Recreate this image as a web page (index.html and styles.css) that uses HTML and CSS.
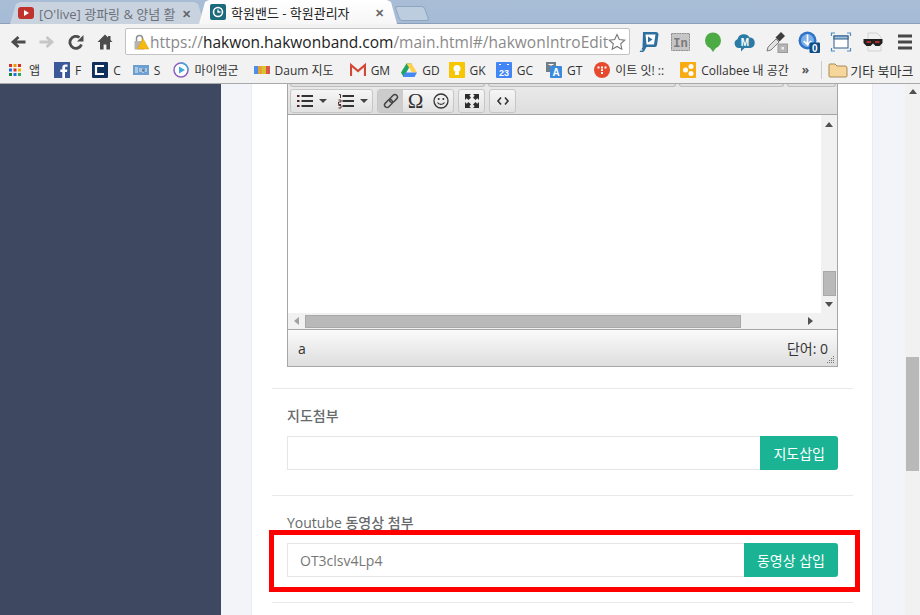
FILE: index.html
```html
<!DOCTYPE html>
<html>
  <head>
    <meta charset="utf-8">
    <title>학원밴드 - 학원관리자</title>
    <link rel="stylesheet" href="styles.css">
  </head>
  <body>
    <div id="tabstrip">
      <div class="tab">
        <svg class="fav" viewBox="0 0 16 16"><rect y="2" width="16" height="12" rx="3" fill="#c0322d"/><path d="M6 5l5 3-5 3z" fill="#fff"/></svg>
        <span class="tab-title">[O'live] 광파링 &amp; 양념 활</span>
        <span class="tab-x">✕</span>
      </div>
      <div class="tab active">
        <svg class="fav" viewBox="0 0 16 16"><rect width="16" height="16" rx="2" fill="#1b6b7c"/><circle cx="8" cy="8" r="4.500" fill="none" stroke="#fff" stroke-width="1.600"/><path d="M8 5.500V8h2.500" fill="none" stroke="#fff" stroke-width="1.300"/></svg>
        <span class="tab-title">학원밴드 - 학원관리자</span>
        <span class="tab-x">✕</span>
      </div>
      <div class="tab-new"></div>
    </div>

    <div id="toolbar">
      <svg class="nav" viewBox="0 0 16 16"><path d="M15.500 8H4M8.500 3L3 8l5.500 5" fill="none" stroke="#4c4c4c" stroke-width="2.800"/></svg>
      <svg class="nav" viewBox="0 0 16 16"><path d="M.5 8H12M7.500 3L13 8l-5.500 5" fill="none" stroke="#c6c6c6" stroke-width="2.800"/></svg>
      <svg class="nav" viewBox="0 0 16 16"><path d="M13.500 10.500A6 6 0 1 1 11.500 3.500" fill="none" stroke="#4c4c4c" stroke-width="2.800"/><path d="M9 7.500h6.500V1z" fill="#4c4c4c"/></svg>
      <svg class="nav" viewBox="0 0 16 16"><path d="M11 2h2.500v4.500L11 5z" fill="#4c4c4c"/><path d="M8 .5L.5 8H3v7.500h3.600V10.500h2.800v5H13V8h2.500z" fill="#4c4c4c"/></svg>
      <div id="omnibox">
        <svg class="lock" viewBox="0 0 16 16"><path d="M3.500 7V4.500a3 3 0 0 1 6 0V7" fill="none" stroke="#8f8f8f" stroke-width="1.500"/><rect x="1.500" y="7" width="9.500" height="8.500" fill="#b4b4b4"/><path d="M10 4.500l5.800 10.500H4.200z" fill="#f5b914" stroke="#d99a00" stroke-width=".5"/></svg>
        <div class="url"><span class="url-dim">https://</span>hakwon.hakwonband.com<span class="url-dim">/main.html#/hakwonIntroEdit</span></div>
        <svg class="star" viewBox="0 0 18 18"><path d="M9 1.500l2.300 5 5.400.6-4 3.700 1.100 5.400L9 13.500l-4.800 2.700 1.100-5.400-4-3.700 5.400-.6z" fill="#fff" stroke="#777" stroke-width="1.100"/></svg>
      </div>
      <div class="extensions">
        <svg class="ext" viewBox="0 0 22 22"><path d="M5 1h13c1.500 0 2.500 1 2.500 2.500L19 14c-.3 1.200-1 2-2 2H8.500l-2 3.500c-.5 1-1.500 1.500-2.500 1.500H1.500l3-4.500z" fill="#2d6f9e"/><path d="M7.500 3.500h10L16 13.500H8.500z" fill="#fff"/><path d="M10 5.500l4.500 3-4.500 3z" fill="#2d6f9e"/><circle cx="3.500" cy="19" r="1" fill="#cfe0ec"/></svg>
        <svg class="ext" viewBox="0 0 22 22"><rect x="1.500" y="2.500" width="18" height="17" fill="#c6c6c6" stroke="#8e8e8e" stroke-dasharray="2 .6"/><text x="10.500" y="15.500" text-anchor="middle" class="ext-in">In</text></svg>
        <svg class="ext" viewBox="0 0 22 22"><circle cx="11" cy="9.500" r="8" fill="#4cab45"/><path d="M7.500 16l3.500 5 3.500-5z" fill="#4cab45"/></svg>
        <svg class="ext" viewBox="0 0 22 22"><path d="M5 17a4.500 4.500 0 0 1-1.500-8.700A6.500 6.500 0 0 1 15.500 6.500 5.300 5.300 0 0 1 16.500 17H10.500L7 20.500V17z" fill="#2b7ba4"/><text x="11" y="14.500" text-anchor="middle" class="ext-m">M</text></svg>
        <svg class="ext" viewBox="0 0 22 22"><path d="M1 20l1-4 8-8 3 3-8 8z" fill="#e2e2e2" stroke="#7d7d7d"/><path d="M9.500 6.500L15 1l4 4-5.500 5.500z" fill="#3d3d3d"/><rect x="12" y="13" width="9.500" height="8.500" fill="#b5b5b5" stroke="#9a9a9a"/><rect x="15.500" y="16" width="2.500" height="2.500" fill="#eee"/></svg>
        <svg class="ext" viewBox="0 0 22 22"><circle cx="9.500" cy="9.500" r="9" fill="#2f73c7"/><circle cx="9.500" cy="9.500" r="6.500" fill="#7eb0e8"/><path d="M9.500 3.500v10M5.800 10l3.700 3.800 3.700-3.800" fill="none" stroke="#fff" stroke-width="1.700"/><rect x="11.500" y="11.500" width="10.500" height="10.500" rx="1" fill="#0f4d86"/><text x="16.700" y="20.500" text-anchor="middle" class="ext-zero">0</text></svg>
        <svg class="ext" viewBox="0 0 22 22"><rect x="4" y="5" width="14" height="12" fill="#fff" stroke="#2d5f8c"/><rect x="4" y="5" width="14" height="3" fill="#9fbfdc" stroke="#2d5f8c"/><path d="M1.500 5V2H5M17 2h3.500v3M20.500 17v3H17M5 20H1.500v-3" fill="none" stroke="#4f8dc0" stroke-width="1.200"/></svg>
        <svg class="ext" viewBox="0 0 22 22"><path d="M6 2h9l4 4v14H6z" fill="#f1f1f1" stroke="#d2d2d2"/><path d="M1.500 8h19v4l-3 3h-4l-2.500-2.500L8.500 15h-4l-3-3z" fill="#1f1f1f"/><rect x="4.500" y="10" width="4.500" height="2" fill="#b22d2d"/><rect x="13" y="10" width="4.500" height="2" fill="#b22d2d"/></svg>
        <svg class="ext" viewBox="0 0 22 22"><path d="M4 5h14M4 11h14M4 17h14" stroke="#474747" stroke-width="3"/></svg>
      </div>
    </div>

    <div id="bookmarks">
      <div class="bm bm-apps"><svg class="bm-ico apps" viewBox="0 0 12 12"><path d="M0 0h3v3H0z" fill="#d93025"/><path d="M4.500 0h3v3h-3z" fill="#f29900"/><path d="M9 0h3v3H9z" fill="#d93025"/><path d="M0 4.500h3v3H0z" fill="#1a73e8"/><path d="M4.500 4.500h3v3h-3z" fill="#d93025"/><path d="M9 4.500h3v3H9z" fill="#f9ab00"/><path d="M0 9h3v3H0z" fill="#188038"/><path d="M4.500 9h3v3h-3z" fill="#1a73e8"/><path d="M9 9h3v3H9z" fill="#34a853"/></svg>앱</div>
      <div class="bm bm-f"><svg class="bm-ico" viewBox="0 0 16 16"><rect width="16" height="16" fill="#3b5998"/><path d="M11 16V10h2l.4-2.500H11V6c0-.8.300-1.300 1.300-1.300h1.200V2.500H11.500C9.500 2.500 8.300 3.700 8.300 5.700v1.800H6.300V10h2v6z" fill="#fff"/></svg>F</div>
      <div class="bm bm-c"><svg class="bm-ico" viewBox="0 0 16 16"><rect width="16" height="16" rx="1" fill="#10305c"/><path d="M12 4H4v8h8" fill="none" stroke="#fff" stroke-width="2.200"/></svg>C</div>
      <div class="bm bm-s"><svg class="bm-ico" viewBox="0 0 16 16"><rect y="3" width="16" height="10" fill="#6d9fd0"/><path d="M2 6h3M2 8h3M2 10h3M7 6v4M9 6v4h2M13 6v4" stroke="#e8f0fa"/></svg>S</div>
      <div class="bm bm-my"><svg class="bm-ico" viewBox="0 0 16 16"><circle cx="8" cy="8" r="7" fill="#fff" stroke="#8d5fbf" stroke-width="1.500"/><path d="M8 1a7 7 0 0 1 7 7" fill="none" stroke="#3fa8d8" stroke-width="1.500"/><path d="M6 4.500l6 3.500-6 3.500z" fill="#3fa8d8"/></svg>마이엠군</div>
      <div class="bm bm-daum"><svg class="bm-ico" viewBox="0 0 16 16"><path d="M0 4h4v8H0z" fill="#4d8ee8"/><path d="M4 4h4v8H4z" fill="#e8a13a"/><path d="M8 4h4v8H8z" fill="#d9c52a"/><path d="M12 4h4v8h-4z" fill="#d9564a"/></svg>Daum 지도</div>
      <div class="bm bm-gm"><svg class="bm-ico" viewBox="0 0 16 16"><rect y="2.500" width="16" height="11" fill="#f2f2f2"/><path d="M1 14V3l7 6 7-6v11" fill="none" stroke="#d14836" stroke-width="2.200"/></svg>GM</div>
      <div class="bm bm-gd"><svg class="bm-ico" viewBox="0 0 16 16"><path d="M5.500 1.500h5L5 11 2.500 15 0 10.500z" fill="#1fa463"/><path d="M5.500 1.500h5l5.500 9h-5z" fill="#ffd04b"/><path d="M4 10.500h12L13.500 15H2z" fill="#4688f4"/></svg>GD</div>
      <div class="bm bm-gk"><svg class="bm-ico" viewBox="0 0 16 16"><rect width="16" height="16" rx="1" fill="#f7c600"/><circle cx="8" cy="6.500" r="3.500" fill="#fff"/><rect x="6" y="10" width="4" height="3" fill="#fff"/></svg>GK</div>
      <div class="bm bm-gc"><svg class="bm-ico" viewBox="0 0 16 16"><rect width="16" height="16" rx="1" fill="#4285f4"/><path d="M3 2.500h2M11 2.500h2" stroke="#fff"/><text x="8" y="14" text-anchor="middle" class="ext-cal">23</text></svg>GC</div>
      <div class="bm bm-gt"><svg class="bm-ico" viewBox="0 0 16 16"><rect x="0" y="0" width="10" height="10" fill="#6f7f8a"/><path d="M2.500 2.500h5M5 2v5" stroke="#fff"/><rect x="4" y="4" width="12" height="12" rx="1" fill="#3a8ae0"/><text x="10" y="14" text-anchor="middle" class="ext-gt">A</text></svg>GT</div>
      <div class="bm bm-it"><svg class="bm-ico" viewBox="0 0 16 16"><circle cx="8" cy="8" r="8" fill="#e6492d"/><path d="M3.500 5.500h2M7 5.500h2M10.500 5.500h2M7 8.200h2M7 11h2" stroke="#fff" stroke-width="1.800"/></svg>이트 잇! ::</div>
      <div class="bm bm-co"><svg class="bm-ico" viewBox="0 0 16 16"><rect width="16" height="16" rx="1" fill="#f9ab14"/><circle cx="5.500" cy="8" r="2.500" fill="#fff"/><circle cx="11" cy="4.500" r="2.500" fill="#fff"/><circle cx="11" cy="11.500" r="2.500" fill="#fff"/></svg>Collabee 내 공간</div>
      <div class="bm-more">»</div>
      <div class="bm bm-other"><svg class="bm-folder" viewBox="0 0 20 16"><path d="M1 3a1 1 0 0 1 1-1h5l2 2h8a2 2 0 0 1 2 2v8a1 1 0 0 1-1 1H2a1 1 0 0 1-1-1z" fill="#f6d69a" stroke="#a98a55"/></svg>기타 북마크</div>
    </div>

    <div id="page">
      <div id="sidebar"></div>
      <div id="gutter">
        <div id="card">
          <div class="row row-editor">
            <div class="editor">
              <div class="ed-clip">
                <span class="ed-stub stub-a"></span>
                <span class="ed-stub stub-b"></span>
                <span class="ed-stub stub-c"></span>
                <span class="ed-stub stub-d"></span>
              </div>
              <div class="ed-tools">
                <div class="ed-group">
                  <button class="ed-btn wide"><svg viewBox="0 0 16 14"><path d="M0 2h2.500M0 7h2.500M0 12h2.500" stroke="#522" stroke-width="2"/><path d="M4.500 2H16M4.500 7H16M4.500 12H16" stroke="#333" stroke-width="1.800"/></svg><i class="caret"></i></button>
                  <button class="ed-btn wide"><svg viewBox="0 0 16 14"><path d="M1 .5h1.500v3.500M.5 6h2.500v2H.5v2.500H3M.5 11.500H3v2.500H.5" fill="none" stroke="#533" stroke-width="1"/><path d="M4.500 2H16M4.500 7H16M4.500 12H16" stroke="#333" stroke-width="1.800"/></svg><i class="caret"></i></button>
                </div>
                <div class="ed-group">
                  <button class="ed-btn on"><svg viewBox="0 0 16 16"><g transform="rotate(-45 8 8)" fill="none" stroke="#444" stroke-width="1.500"><rect x="0" y="5.500" width="9" height="5" rx="2.500"/><rect x="7" y="5.500" width="9" height="5" rx="2.500"/></g></svg></button>
                  <button class="ed-btn ed-omega">Ω</button>
                  <button class="ed-btn"><svg viewBox="0 0 16 16"><circle cx="8" cy="8" r="7" fill="none" stroke="#333" stroke-width="1.300"/><circle cx="5.700" cy="6" r="1" fill="#333"/><circle cx="10.300" cy="6" r="1" fill="#333"/><path d="M4.500 9.500c1.500 2.500 5.500 2.500 7 0" fill="none" stroke="#333" stroke-width="1.200"/></svg></button>
                </div>
                <div class="ed-group">
                  <button class="ed-btn"><svg viewBox="0 0 16 16"><path d="M1 1h6L5.300 2.700 7 4.500 4.500 7 2.700 5.300 1 7zM15 1v6l-1.700-1.700L11.500 7 9 4.500l1.700-1.800L9 1zM1 15V9l1.700 1.700L4.500 9 7 11.500l-1.700 1.800L7 15zM15 15H9l1.700-1.700L9 11.500 11.500 9l1.800 1.700L15 9z" fill="#2d2d2d"/></svg></button>
                </div>
                <div class="ed-group">
                  <button class="ed-btn"><svg viewBox="0 0 16 16"><path d="M6 4.500L3 8l3 3.500M10 4.500L13 8l-3 3.500" fill="none" stroke="#333" stroke-width="1.600"/></svg></button>
                </div>
              </div>
              <div class="ed-body">
                <div class="ed-area">
                  <div class="ed-white"></div>
                  <div class="ed-vbar">
                    <i class="arrow up"></i>
                    <div class="ed-vspace"></div>
                    <div class="ed-vthumb"></div>
                    <i class="arrow down"></i>
                  </div>
                </div>
                <div class="ed-hbar">
                  <i class="arrow left"></i>
                  <div class="ed-hthumb"></div>
                  <i class="arrow right"></i>
                </div>
              </div>
              <div class="ed-status">
                <span>a</span>
                <span class="ed-count">단어: 0</span>
                <svg class="ed-grip" viewBox="0 0 10 8"><path d="M8 0h1v1H8zM6 2h1v1H6zM8 2h1v1H8zM4 4h1v1H4zM6 4h1v1H6zM8 4h1v1H8zM2 6h1v1H2zM4 6h1v1H4zM6 6h1v1H6zM8 6h1v1H8z" fill="#777"/></svg>
              </div>
            </div>
          </div>
          <div class="row">
            <label class="field-label">지도첨부</label>
            <div class="input-group">
              <input class="input" type="text">
              <button class="btn-add">지도삽입</button>
            </div>
          </div>
          <div class="row">
            <label class="field-label">Youtube 동영상 첨부</label>
            <div class="input-group">
              <input class="input" type="text" value="OT3clsv4Lp4">
              <button class="btn-add">동영상 삽입</button>
            </div>
          </div>
        </div>
      </div>
      <div id="scrollbar">
        <i class="arrow up"></i>
        <div class="sb-thumb"></div>
      </div>
      <div id="mark"></div>
    </div>
  </body>
</html>
```

FILE: styles.css
```css
* {
  box-sizing: border-box;
}

html, body {
  margin: 0;
  height: 615px;
  overflow: hidden;
}

body {
  width: 920px;
  font-family: "Open Sans", "Noto Sans CJK KR", sans-serif;
  color: #222;
  background: #fff;
}

/* browser chrome */
#tabstrip {
  display: flex;
  align-items: flex-end;
  height: 24px;
  padding-left: 10px;
  background: linear-gradient(#a9bdd6, #a5bbd5);
  box-shadow: inset 0 -1px 0 #8ba0b8;
}

.tab {
  display: flex;
  align-items: center;
  width: 194px;
  height: 22px;
  padding: 0 13px 0 8px;
  margin-right: -5px;
  background: #c9d3df;
  color: #6b7078;
  font-size: 13px;
  clip-path: polygon(0 100%, 6px 2px, 10px 0, calc(100% - 10px) 0, calc(100% - 6px) 2px, 100% 100%);
}

.tab.active {
  width: 198px;
  height: 24px;
  padding-left: 11px;
  background: linear-gradient(#fff, #f6f6f6);
  color: #222;
}

.tab-new {
  width: 30px;
  height: 15px;
  margin: 0 0 3px 5px;
  background: #bccde0;
  border: 1px solid #8fa5bf;
  border-radius: 3px;
  transform: skewX(20deg);
}

.fav {
  width: 16px;
  height: 16px;
  margin-right: 5px;
  flex: none;
}

.tab-title {
  flex: 1;
  white-space: nowrap;
  overflow: hidden;
}

.tab-x {
  font-size: 11px;
  font-weight: bold;
  color: #666;
  margin-left: 4px;
}

#toolbar {
  display: flex;
  align-items: center;
  height: 33px;
  padding: 2px 0 0 10px;
  background: #f2f2f2;
}

.nav {
  width: 16px;
  height: 16px;
  margin-right: 13px;
  flex: none;
}

#omnibox {
  display: flex;
  align-items: center;
  width: 505px;
  height: 27px;
  margin-left: -1px;
  padding: 0 3px 0 7px;
  background: #fff;
  border: 1px solid #c2c2c2;
  border-radius: 2px;
  flex: none;
}

.lock {
  width: 16px;
  height: 16px;
  margin-right: 1px;
  flex: none;
}

.url {
  flex: 1;
  font-size: 15.5px;
  color: #222;
  white-space: nowrap;
  overflow: hidden;
}

.url-dim {
  color: #8a8a8a;
}

.star {
  width: 18px;
  height: 18px;
  flex: none;
}

.extensions {
  display: flex;
  align-items: center;
  padding-left: 3px;
}

.ext {
  width: 22px;
  height: 22px;
  margin: 0 5px;
  flex: none;
}

.ext-in {
  font: bold 12px "Liberation Mono", monospace;
  fill: #7a7a7a;
}

.ext-m {
  font: bold 10px "Liberation Sans", sans-serif;
  fill: #fff;
}

.ext-zero {
  font: bold 10px "Liberation Sans", sans-serif;
  fill: #fff;
}

.ext-cal {
  font: bold 9px "Liberation Sans", sans-serif;
  fill: #fff;
}

.ext-gt {
  font: bold 10px "Liberation Sans", sans-serif;
  fill: #fff;
}

#bookmarks {
  display: flex;
  align-items: center;
  height: 27px;
  padding-left: 9px;
  background: #f2f2f2;
  border-bottom: 1px solid #a8a8a8;
  font-size: 12px;
  color: #333;
  white-space: nowrap;
}

.bm {
  display: flex;
  align-items: center;
  margin-right: 12px;
}

.bm-apps { margin-right: 14px; }
.bm-f { margin-right: 11px; }
.bm-s { margin-right: 13px; }
.bm-my { margin-right: 15px; }
.bm-daum { margin-right: 16px; }
.bm-gm { margin-right: 11px; }
.bm-gd { margin-right: 9px; }
.bm-gk { margin-right: 10px; }
.bm-gc { margin-right: 13px; }
.bm-it { margin-right: 16px; }
.bm-co { margin-right: 10px; }

.bm-ico {
  width: 16px;
  height: 16px;
  margin-right: 5px;
  flex: none;
}

.bm-ico.apps {
  width: 12px;
  height: 12px;
  margin-right: 8px;
}

.bm-more {
  margin: 0 6px 0 3px;
  padding-right: 12px;
  border-right: 1px solid #ccc;
  line-height: 18px;
  font-weight: bold;
  color: #555;
}

.bm-folder {
  width: 20px;
  height: 16px;
  margin-right: 2px;
}

.bm-other {
  margin-right: 0;
  font-size: 13px;
}

/* page */
#page {
  position: relative;
  display: flex;
  height: 531px;
  overflow: hidden;
}

#sidebar {
  width: 221px;
  background: #3e4861;
  flex: none;
}

#gutter {
  width: 684px;
  padding: 0 32px 0 30px;
  background: #f3f4f9;
  flex: none;
}

#card {
  height: 100%;
  padding: 0 19px 0 20px;
  background: #fff;
  border-left: 1px solid #e9ebef;
  border-right: 1px solid #e9ebef;
}

.row {
  padding: 17px 15px 25px;
  border-bottom: 1px solid #e7eaec;
}

.row-editor {
  padding-top: 0;
  padding-bottom: 21px;
}

.field-label {
  display: block;
  height: 20px;
  margin-bottom: 10px;
  font-size: 14px;
  font-weight: 500;
  line-height: 20px;
  color: #676a6c;
}

.input-group {
  display: flex;
  height: 34px;
}

.input {
  flex: 1;
  min-width: 0;
  height: 34px;
  padding: 0 12px;
  border: 1px solid #e5e6e7;
  border-right: 0;
  outline: 0;
  font: 14px "Open Sans", sans-serif;
  color: #777;
}

.btn-add {
  height: 34px;
  padding: 0 13px;
  background: #1ab394;
  border: 0;
  border-radius: 0 3px 3px 0;
  color: #fff;
  font: 14px "Open Sans", "Noto Sans CJK KR", sans-serif;
}

/* editor */
.editor {
  width: 551px;
  border: 1px solid #a6a6a6;
  border-top: 0;
}

.ed-clip {
  display: flex;
  gap: 3px;
  height: 3px;
  padding-left: 2px;
  background: #e6e6e6;
}

.ed-stub {
  height: 3px;
  background: #e0e0e0;
  border: 1px solid #bdbdbd;
  border-top: 0;
  border-radius: 0 0 3px 3px;
}

.stub-a {
  width: 195px;
}

.stub-b {
  width: 188px;
}

.stub-c {
  width: 105px;
}

.stub-d {
  width: 49px;
}

.ed-tools {
  display: flex;
  gap: 4px;
  height: 28px;
  padding: 2px 0 0 2px;
  background: linear-gradient(#e9e9e9, #dedede);
  border-bottom: 1px solid #a6a6a6;
}

.ed-group {
  display: flex;
  height: 24px;
  border: 1px solid #c6c6c6;
  border-radius: 3px;
  background: linear-gradient(#f6f6f6, #e2e2e2);
}

.ed-btn {
  display: flex;
  align-items: center;
  justify-content: center;
  width: 25px;
  height: 22px;
  padding: 0;
  background: none;
  border: 0;
  font: 21px "Liberation Serif", serif;
  color: #333;
}

.ed-btn svg {
  width: 16px;
  height: 16px;
  flex: none;
}

.ed-btn.wide {
  width: 40.5px;
  padding-left: 2px;
  gap: 6px;
}

.ed-btn.on {
  background: #ccc;
  border-radius: 2px 0 0 2px;
}

.caret {
  width: 0;
  height: 0;
  border: 4px solid transparent;
  border-top-color: #444;
  border-bottom: 0;
}

.ed-body {
  height: 214px;
  display: flex;
  flex-direction: column;
}

.ed-area {
  display: flex;
  flex: 1;
}

.ed-white {
  flex: 1;
  background: #fff;
}

.ed-vbar {
  display: flex;
  flex-direction: column;
  align-items: center;
  width: 16px;
  padding: 7px 0 6px;
  background: #f1f1f1;
}

.ed-vspace {
  flex: 1;
}

.ed-vthumb {
  width: 13px;
  height: 25px;
  margin-bottom: 6px;
  background: #b9b9b9;
  border: 1px solid #a8a8a8;
}

.ed-hbar {
  display: flex;
  align-items: center;
  height: 16px;
  padding: 0 24px 0 6px;
  background: #f1f1f1;
}

.ed-hthumb {
  width: 436px;
  height: 13px;
  margin: 0 auto 0 6px;
  background: #b9b9b9;
  border: 1px solid #a8a8a8;
}

.arrow {
  display: block;
  width: 0;
  height: 0;
  flex: none;
  border: 4px solid transparent;
}

.arrow.up {
  border-top: 0;
  border-bottom: 5px solid #505050;
}

.arrow.down {
  border-bottom: 0;
  border-top: 5px solid #505050;
}

.arrow.left {
  border-left: 0;
  border-right: 5px solid #a0a0a0;
}

.arrow.right {
  border-right: 0;
  border-left: 5px solid #505050;
}

.ed-status {
  position: relative;
  display: flex;
  align-items: center;
  justify-content: space-between;
  height: 37px;
  padding: 0 9px 0 10px;
  background: linear-gradient(#fafafa, #dedede);
  border-top: 1px solid #a6a6a6;
  font: 14px "Open Sans", "Noto Sans CJK KR", sans-serif;
  color: #333;
}

.ed-grip {
  position: absolute;
  right: 2px;
  bottom: 2px;
  width: 10px;
  height: 8px;
}

/* window scrollbar */
#scrollbar {
  position: relative;
  width: 15px;
  padding-top: 5px;
  background: #f1f1f1;
  flex: none;
}

#scrollbar .arrow {
  margin: 0 auto;
}

.sb-thumb {
  width: 13px;
  height: 114px;
  margin: 263px auto 0;
  background: #b9b9b9;
}

/* red note drawn over the screenshot */
#mark {
  position: absolute;
  left: 269px;
  top: 446px;
  width: 591px;
  height: 62px;
  border: 5px solid #f00;
}
```
